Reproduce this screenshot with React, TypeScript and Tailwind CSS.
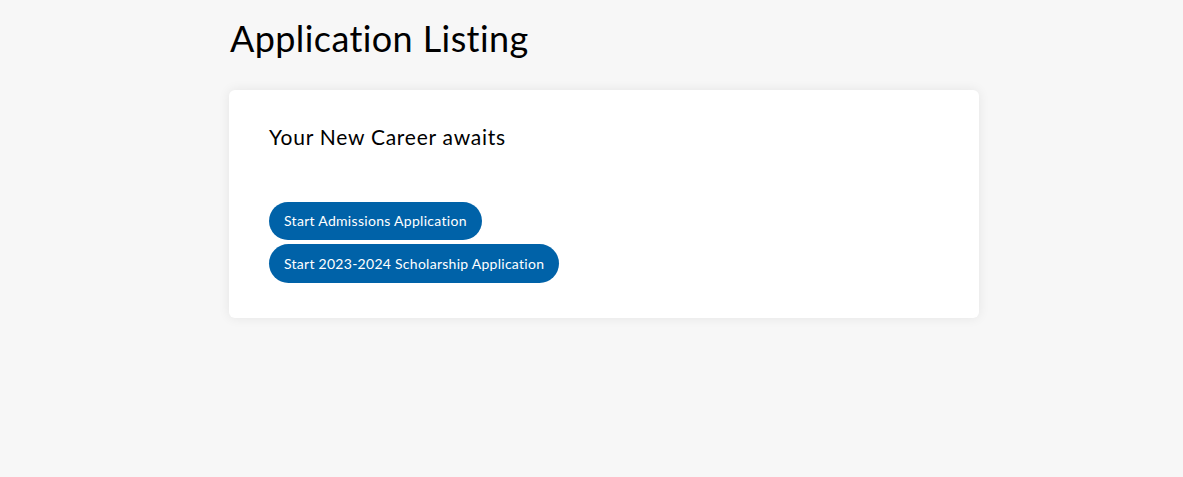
export default function App() {
  return (
    <div className="min-h-screen bg-[#f7f7f7] font-['Lato',sans-serif] text-black">
      <div className="ml-[229px] w-[750px] pt-[13px]">
        <h1 className="pl-[1px] text-[36px] leading-[50px] font-normal tracking-[0.4px]">Application Listing</h1>
        <div className="mt-[27px] rounded-md bg-white px-10 pt-[30px] pb-[35px] shadow-[0_0_12px_rgba(0,0,0,0.08)]">
          <h2 className="text-[21px] leading-[34px] tracking-[0.75px]">Your New Career awaits</h2>
          <div className="mt-[48px] flex flex-col items-start gap-1">
            <button className="h-[38px] rounded-full bg-[#0062a8] px-[15px] pb-[1px] text-[14px] tracking-[0.3px] text-white">
              Start Admissions Application
            </button>
            <button className="h-[39px] rounded-full bg-[#0062a8] px-[15px] pb-[1px] text-[14px] tracking-[0.27px] text-white">
              Start 2023-2024 Scholarship Application
            </button>
          </div>
        </div>
      </div>
    </div>
  );
}
